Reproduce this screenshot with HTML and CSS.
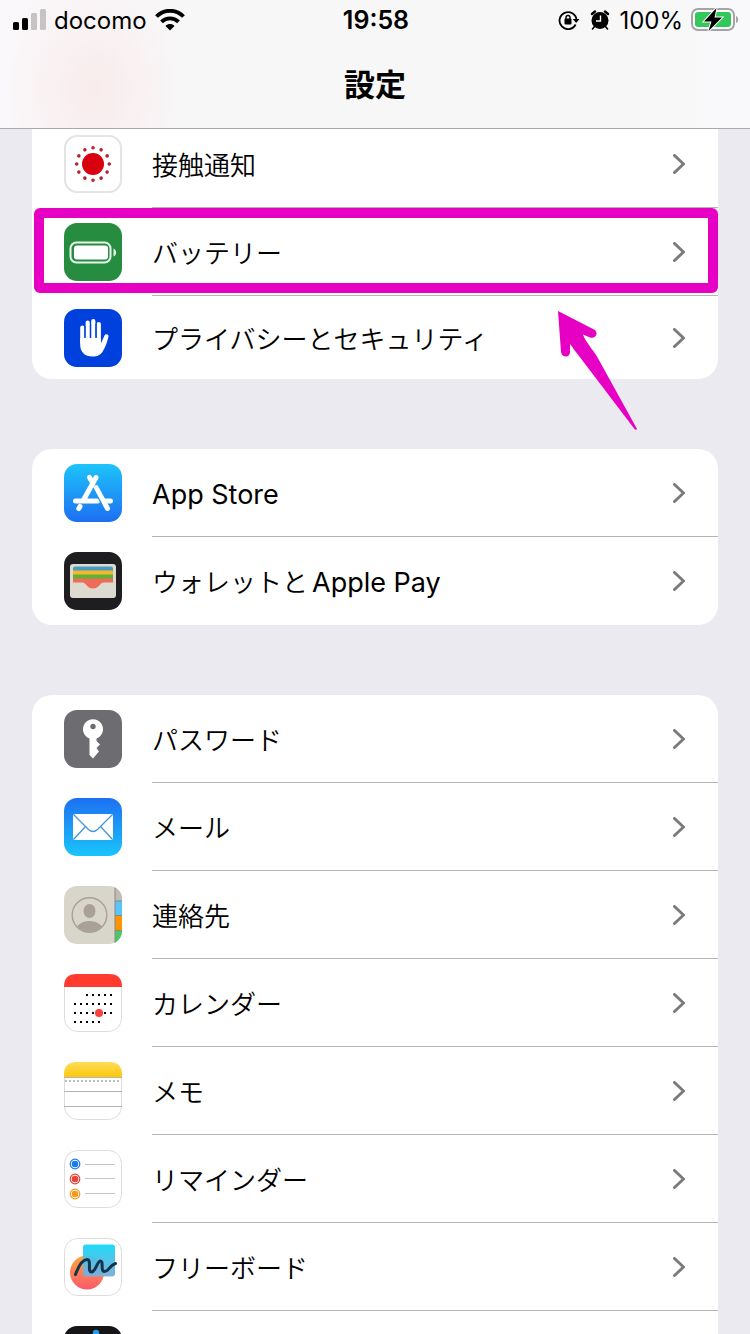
FILE: index.html
```html
<!DOCTYPE html>
<html lang="ja">
<head>
    <meta charset="UTF-8">
    <meta name="viewport" content="width=device-width, initial-scale=1.0">
    <title>設定</title>
    <link rel="stylesheet" href="styles.css">
</head>
<body>
    <header class="header">
        <div class="status">
            <div class="status__left">
                <svg width="34" height="22" viewBox="0 0 34 22">
                    <rect x="0" y="13" width="6" height="8" rx="1.5"/>
                    <rect x="9" y="9" width="6" height="12" rx="1.5"/>
                    <rect x="18" y="4" width="6" height="17" rx="1.5" fill="#c5c3c4"/>
                    <rect x="27" y="0" width="6" height="21" rx="1.5" fill="#c5c3c4"/>
                </svg>
                <span class="status__carrier">docomo</span>
                <svg width="30" height="22" viewBox="0 0 30 22">
                    <path d="M1.500 7.500C9-.2 21-.2 28.500 7.500M6.500 12.800c4.800-4.700 12.200-4.700 17 0" fill="none" stroke="#000" stroke-width="3.800"/>
                    <path d="M15 21.500l-4.500-4.600c2.500-2.400 6.500-2.400 9 0z"/>
                </svg>
            </div>
            <span class="status__time">19:58</span>
            <div class="status__right">
                <svg width="22" height="20" viewBox="0 0 22 20">
                    <path d="M17.600 14.500A8.500 8.500 0 1 1 18.500 10" fill="none" stroke="#000" stroke-width="1.800"/>
                    <path d="M14.800 9h6.700l-3.300 4z"/>
                    <rect x="6.500" y="8.500" width="7" height="6" rx="1"/>
                    <path d="M8 9V7.500a2 2 0 0 1 4 0V9" fill="none" stroke="#000" stroke-width="1.400"/>
                </svg>
                <svg class="status__alarm" width="20" height="20" viewBox="0 0 20 20">
                    <circle cx="10" cy="10.500" r="8.500"/>
                    <path d="M2 4l3-2.500M18 4l-3-2.500" stroke="#000" stroke-width="2.400" stroke-linecap="round"/>
                    <path d="M4.500 16.500L2.500 19M15.500 16.500l2 2.500" stroke="#000" stroke-width="1.600" stroke-linecap="round"/>
                    <path d="M10.500 5.500v5.500H6" fill="none" stroke="#fff" stroke-width="1.400"/>
                </svg>
                <span class="status__percent">100%</span>
                <svg width="48" height="26" viewBox="0 0 48 26">
                    <rect x="1" y="2" width="42" height="21" rx="6" fill="#fff" stroke="#a5a5a7" stroke-width="2"/>
                    <rect x="4" y="5" width="36" height="15" rx="3" fill="#34c759"/>
                    <path d="M45 9c3 1 3 6 0 7z" fill="#a5a5a7"/>
                    <path d="M25.500 1L13 14.500h7.500L17.500 24 31 10.500h-7.500z" stroke="#fff" stroke-width="2" paint-order="stroke"/>
                </svg>
            </div>
        </div>
        <h1 class="header__title">設定</h1>
    </header>

    <main class="settings">
        <nav class="group">
            <a class="row" href="#">
                <svg class="icon" viewBox="0 0 58 58">
                    <rect x="1" y="1" width="56" height="56" rx="12" fill="#fff" stroke="#e4e4e4" stroke-width="2"/>
                    <circle cx="29" cy="29" r="11" fill="#d9000f"/>
                    <circle cx="29" cy="29" r="16.300" fill="none" stroke="#b5222f" stroke-width="3.600" stroke-linecap="round" pathLength="120" stroke-dasharray="0 10"/>
                </svg>
                <span class="row__body"><span class="label">接触通知</span><svg class="chevron" viewBox="0 0 12 20"><path d="M1.500 1.500l9 8.500-9 8.500"/></svg></span>
            </a>
            <a class="row row--marked" href="#">
                <svg class="icon" viewBox="0 0 58 58">
                    <rect width="58" height="58" rx="13" fill="#268c40"/>
                    <rect x="6.500" y="19.500" width="40" height="20" rx="6" fill="none" stroke="#e9f7ea" stroke-width="2"/>
                    <rect x="10" y="22.500" width="34" height="14" rx="3" fill="#fff"/>
                    <path d="M49.500 25.500c3.500 1.500 3.500 6.500 0 8z" fill="#e9f7ea"/>
                </svg>
                <span class="row__body"><span class="label">バッテリー</span><svg class="chevron" viewBox="0 0 12 20"><path d="M1.500 1.500l9 8.500-9 8.500"/></svg></span>
            </a>
            <a class="row row--short" href="#">
                <svg class="icon" viewBox="0 0 58 58">
                    <rect width="58" height="58" rx="13" fill="#0040dd"/>
                    <path d="M18.300 18.500V34M23.700 13.500V32M29.300 12V32M34.800 15V33" stroke="#fff" stroke-width="4.200" stroke-linecap="round"/>
                    <path d="M16.200 29h20.700v5.500l3.600-8c1-2 4.300-1.500 4 1-1.300 6-3.300 11-5.500 14.500-2.300 4-5.800 5.600-10.500 5.600-8 0-12.300-4.600-12.300-12z" fill="#fff"/>
                    <path d="M21 17v11.500M26.500 15v13.500M32 15v13.500" stroke="#0040dd" stroke-width="1.200"/>
                </svg>
                <span class="row__body"><span class="label">プライバシーとセキュリティ</span><svg class="chevron" viewBox="0 0 12 20"><path d="M1.500 1.500l9 8.500-9 8.500"/></svg></span>
                <svg class="arrow" viewBox="0 0 80 120"><path d="M1 1l36 18.500c5 3 2 9.500-4 8l-7-3c3 8 9 14 14 22L80 119q-1 1.500-2.500 0L22 46c-4-5-6-8-9-12v8c0 6-8 6-9 0z"/></svg>
            </a>
        </nav>

        <nav class="group">
            <a class="row" href="#">
                <svg class="icon" viewBox="0 0 58 58">
                    <defs>
                        <linearGradient id="store" x2="0" y2="1"><stop stop-color="#1dc4fb"/><stop offset="1" stop-color="#1d6ff2"/></linearGradient>
                    </defs>
                    <rect width="58" height="58" rx="13" fill="url(#store)"/>
                    <g fill="none" stroke="#fff" stroke-width="5" stroke-linecap="round">
                        <path d="M32 13.500L19.500 36M11.500 37h22M42 37h4.500M16 42.500l-1.200 2"/>
                        <path d="M25.500 13.500l3 5M32 23.500l11.500 21"/>
                    </g>
                    <path d="M29 24l9 17" stroke="#1e98f6" stroke-width="1.200"/>
                </svg>
                <span class="row__body"><span class="label"><span class="latin">App Store</span></span><svg class="chevron" viewBox="0 0 12 20"><path d="M1.500 1.500l9 8.500-9 8.500"/></svg></span>
            </a>
            <a class="row" href="#">
                <svg class="icon" viewBox="0 0 58 58">
                    <rect width="58" height="58" rx="13" fill="#1e1e20"/>
                    <rect x="6" y="12" width="46" height="34" rx="3" fill="#dddbd0"/>
                    <path d="M9 19v-2.500q0-2 2-2h36q2 0 2 2V19z" fill="#4a9bc0"/>
                    <path d="M9 18.500h40v5H9z" fill="#f2b92d"/>
                    <path d="M9 22.500h40v5H9z" fill="#63b132"/>
                    <path d="M9 26.500h40v4h-9c-5 0-4 6-11 6s-6-6-11-6H9z" fill="#ee6d59"/>
                </svg>
                <span class="row__body"><span class="label">ウォレットと<span class="latin latin--after">Apple Pay</span></span><svg class="chevron" viewBox="0 0 12 20"><path d="M1.500 1.500l9 8.500-9 8.500"/></svg></span>
            </a>
        </nav>

        <nav class="group">
            <a class="row" href="#">
                <svg class="icon" viewBox="0 0 58 58">
                    <rect width="58" height="58" rx="13" fill="#6d6c71"/>
                    <path d="M25.500 28.500a10 10 0 1 1 7 0v2.500l3.500 3.500-3.500 3.500 2.500 3.500-6 7-3.500-3.500z" fill="#fff"/>
                    <circle cx="29" cy="16.500" r="2.700" fill="#6d6c71"/>
                </svg>
                <span class="row__body"><span class="label">パスワード</span><svg class="chevron" viewBox="0 0 12 20"><path d="M1.500 1.500l9 8.500-9 8.500"/></svg></span>
            </a>
            <a class="row" href="#">
                <svg class="icon" viewBox="0 0 58 58">
                    <defs>
                        <linearGradient id="mail" x2="0" y2="1"><stop stop-color="#1d70f2"/><stop offset="1" stop-color="#1ac4fb"/></linearGradient>
                    </defs>
                    <rect width="58" height="58" rx="13" fill="url(#mail)"/>
                    <rect x="9" y="16" width="40" height="26" rx="1.500" fill="#fff"/>
                    <path d="M9.500 16.500l15 15q4.500 4 9 0l15-15M9.500 41.500L21 29M48.500 41.500L37 29" fill="none" stroke="#3e97dd" stroke-width="1.300"/>
                </svg>
                <span class="row__body"><span class="label">メール</span><svg class="chevron" viewBox="0 0 12 20"><path d="M1.500 1.500l9 8.500-9 8.500"/></svg></span>
            </a>
            <a class="row" href="#">
                <svg class="icon" viewBox="0 0 58 58">
                    <defs>
                        <clipPath id="card"><rect width="58" height="58" rx="13"/></clipPath>
                        <clipPath id="face"><circle cx="25.500" cy="29" r="17"/></clipPath>
                    </defs>
                    <g clip-path="url(#card)">
                        <path d="M0 0h58v58H0z" fill="#d8d5cb"/>
                        <path d="M51 0h7v15h-7z" fill="#bfbcb4"/>
                        <path d="M51 15h7v15h-7z" fill="#5ac5fa"/>
                        <path d="M51 30h7v15h-7z" fill="#ff9500"/>
                        <path d="M51 45h7v13h-7z" fill="#4cc764"/>
                        <path d="M51 0v58M51 15h7M51 29.500h7M51 44.500h7" stroke="#8a8880" stroke-width="1"/>
                    </g>
                    <g fill="#a9a198">
                        <ellipse cx="25.500" cy="25" rx="6" ry="7"/>
                        <ellipse cx="25.500" cy="45" rx="14" ry="10" clip-path="url(#face)"/>
                    </g>
                    <circle cx="25.500" cy="29" r="17.300" fill="none" stroke="#a9a198" stroke-width="1.400"/>
                </svg>
                <span class="row__body"><span class="label">連絡先</span><svg class="chevron" viewBox="0 0 12 20"><path d="M1.500 1.500l9 8.500-9 8.500"/></svg></span>
            </a>
            <a class="row" href="#">
                <svg class="icon" viewBox="0 0 58 58">
                    <rect x=".5" y=".5" width="57" height="57" rx="13" fill="#fff" stroke="#dcdcdc"/>
                    <path d="M0 13C0 4 4 0 13 0h32c9 0 13 4 13 13z" fill="#ff3b30"/>
                    <g stroke="#000" stroke-width="2" stroke-dasharray="2 4">
                        <path d="M22 21h26M10 30h38M10 39h38M10 48h26"/>
                    </g>
                    <circle cx="35" cy="39" r="4.800" fill="#fff"/>
                    <circle cx="35" cy="39" r="4" fill="#f8423a"/>
                </svg>
                <span class="row__body"><span class="label">カレンダー</span><svg class="chevron" viewBox="0 0 12 20"><path d="M1.500 1.500l9 8.500-9 8.500"/></svg></span>
            </a>
            <a class="row" href="#">
                <svg class="icon" viewBox="0 0 58 58">
                    <defs>
                        <linearGradient id="memo" x2="0" y2="1"><stop stop-color="#ffdc58"/><stop offset="1" stop-color="#fcc80a"/></linearGradient>
                    </defs>
                    <rect x=".5" y=".5" width="57" height="57" rx="13" fill="#fff" stroke="#dcdcdc"/>
                    <path d="M0 15v-2C0 4 4 0 13 0h32c9 0 13 4 13 13v2z" fill="url(#memo)"/>
                    <path d="M0 15.500h58M0 29.500h58M0 44.500h58" stroke="#b4b4b4"/>
                    <path d="M1 19h56" stroke="#bdbdbd" stroke-width="2" stroke-dasharray="2 2"/>
                </svg>
                <span class="row__body"><span class="label">メモ</span><svg class="chevron" viewBox="0 0 12 20"><path d="M1.500 1.500l9 8.500-9 8.500"/></svg></span>
            </a>
            <a class="row" href="#">
                <svg class="icon" viewBox="0 0 58 58">
                    <rect x=".5" y=".5" width="57" height="57" rx="13" fill="#fff" stroke="#dcdcdc"/>
                    <path d="M21 14.500h30M21 28.500h30M21 43.500h30" stroke="#c4c4c6"/>
                    <g fill="none" stroke-width="1.200">
                        <circle cx="11" cy="14" r="4.800" stroke="#1a7bef"/>
                        <circle cx="11" cy="29" r="4.800" stroke="#ea4339"/>
                        <circle cx="11" cy="44" r="4.800" stroke="#f39a1a"/>
                    </g>
                    <circle cx="11" cy="14" r="3.300" fill="#1a7bef"/>
                    <circle cx="11" cy="29" r="3.300" fill="#ea4339"/>
                    <circle cx="11" cy="44" r="3.300" fill="#f39a1a"/>
                </svg>
                <span class="row__body"><span class="label">リマインダー</span><svg class="chevron" viewBox="0 0 12 20"><path d="M1.500 1.500l9 8.500-9 8.500"/></svg></span>
            </a>
            <a class="row" href="#">
                <svg class="icon" viewBox="0 0 58 58">
                    <defs>
                        <linearGradient id="ball" x2="0" y2="1"><stop stop-color="#ffa63a"/><stop offset="1" stop-color="#fb5a6d"/></linearGradient>
                        <linearGradient id="sheet" x2="0" y2="1"><stop stop-color="#12d8f8"/><stop offset=".5" stop-color="#4ac0e8"/><stop offset="1" stop-color="#7eadd9"/></linearGradient>
                    </defs>
                    <rect x=".5" y=".5" width="57" height="57" rx="13" fill="#fff" stroke="#dcdcdc"/>
                    <circle cx="23" cy="34.500" r="17" fill="url(#ball)"/>
                    <rect x="19" y="6.500" width="32" height="32" rx="3" fill="url(#sheet)" fill-opacity=".95"/>
                    <path d="M11.500 36.500C15 27 19 21.500 23 21.500c5 0 0 12.500 4.500 12.500s5.500-11 9-11-.5 10.500 4 10.500 4.500-6 11-8" fill="none" stroke="#12354f" stroke-width="3" stroke-linecap="round"/>
                </svg>
                <span class="row__body"><span class="label">フリーボード</span><svg class="chevron" viewBox="0 0 12 20"><path d="M1.500 1.500l9 8.500-9 8.500"/></svg></span>
            </a>
            <a class="row" href="#">
                <svg class="icon" viewBox="0 0 58 58">
                    <rect width="58" height="58" rx="13" fill="#151517"/>
                    <circle cx="32" cy="7" r="3.200" fill="#1f9bf0"/>
                </svg>
                <span class="row__body"></span>
            </a>
        </nav>
    </main>
</body>
</html>
```

FILE: styles.css
```css
*,
*::after {
    box-sizing: border-box;
}

body {
    display: flex;
    flex-direction: column;
    margin: 0;
    height: 100vh;
    background-color: #ebeaf1;
    color: #000;
    font-family: Inter, "Noto Sans CJK JP", sans-serif;
}

.header {
    position: relative;
    z-index: 1;
    flex: none;
    height: 129px;
    background: radial-gradient(ellipse 90px 120px at 95px 90px, #f9ebec, transparent), linear-gradient(to right, #faf8fa, #f7f7f7 30%, #f7f7f7 80%, #f9f9fb);
    border-bottom: 1px solid #a9a9ad;
}

.status {
    display: grid;
    grid-template-columns: 1fr auto 1fr;
    align-items: center;
    height: 40px;
    padding: 0 11px 0 13px;
    font-size: 24px;
}

.status__left,
.status__right {
    display: flex;
    align-items: center;
}

.status__right {
    justify-content: flex-end;
}

.status__carrier {
    margin: 0 8px 0 7px;
}

.status__time {
    font-weight: 600;
    font-size: 25px;
}

.status__alarm {
    margin: 0 9px 0 10px;
}

.status__percent {
    margin-right: 8px;
}

.header__title {
    margin: 0;
    font-size: 31px;
    line-height: 90px;
    font-weight: 700;
    text-align: center;
}

/* リストはヘッダーの下に少し潜り込む */
.settings {
    flex: 1;
    min-height: 0;
    margin-top: -9px;
    padding: 0 32px;
    overflow: hidden;
}

.group {
    margin-bottom: 70px;
    border-radius: 20px;
    background-color: #fff;
}

.group:first-child {
    border-radius: 0 0 20px 20px;
}

.row {
    position: relative;
    display: flex;
    align-items: center;
    gap: 30px;
    height: 88px;
    padding-left: 32px;
    color: #000;
    text-decoration: none;
}

.row--short {
    height: 83px;
}

.icon {
    flex: none;
    width: 58px;
    height: 58px;
}

.row__body {
    flex: 1;
    display: flex;
    align-items: center;
    justify-content: space-between;
    height: 100%;
    padding-right: 33px;
    border-bottom: 1px solid #b5b5b8;
}

.row:last-child .row__body {
    border-bottom: 0;
}

.label {
    padding-top: 4px;
    font-size: 26px;
    line-height: 40px;
    font-weight: 350;
}

.latin {
    font-size: 27px;
    font-weight: 400;
}

.latin--after {
    margin-left: 4px;
}

.chevron {
    width: 12px;
    height: 20px;
    fill: none;
    stroke: #7b7b7e;
    stroke-width: 3;
    stroke-linecap: round;
    stroke-linejoin: round;
}

/* 注目してほしい行の枠 */
.row--marked::after {
    content: "";
    position: absolute;
    top: 0;
    left: 2px;
    right: 0;
    height: 85px;
    border: 10px solid #e600c4;
    border-radius: 6px;
}

.arrow {
    position: absolute;
    top: 14px;
    right: 81px;
    width: 80px;
    height: 120px;
    fill: #e600c4;
}
```
